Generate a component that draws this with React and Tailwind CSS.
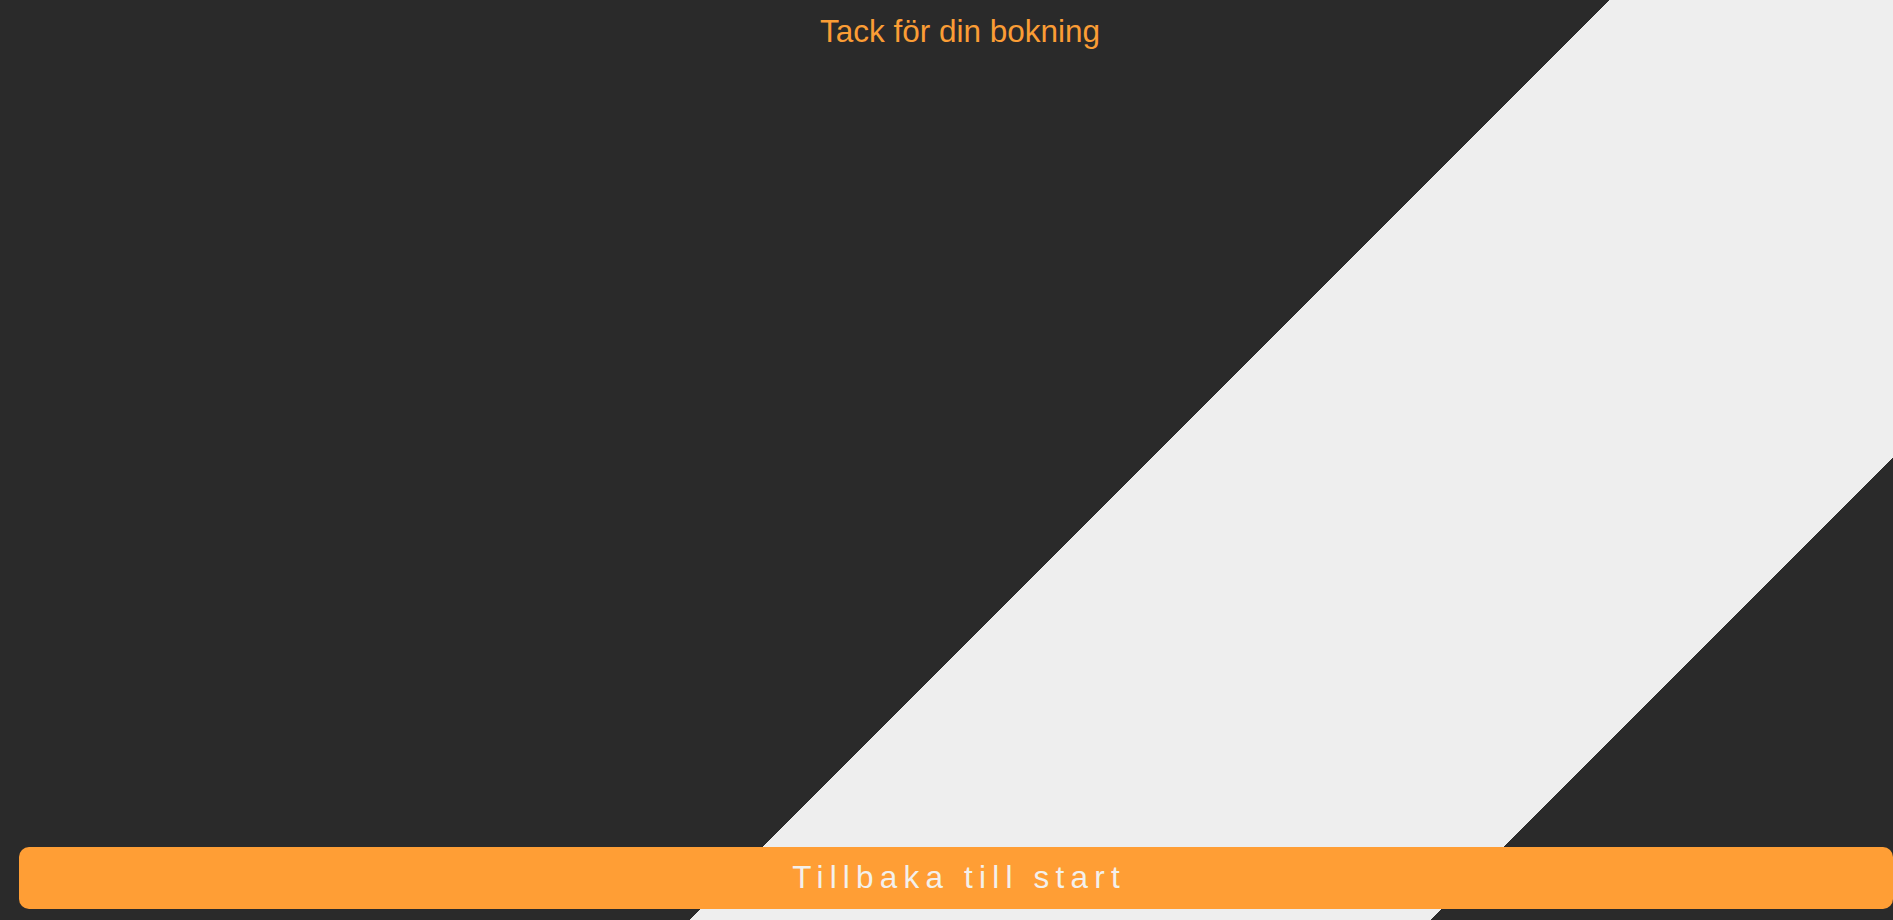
export default function App() {
  return (
    <div
      className="flex h-screen w-full flex-col justify-between overflow-hidden bg-[#2a2a2a] bg-[linear-gradient(135deg,#2a2a2a_0px,#2a2a2a_1138px,#eeeeee_1138px,#eeeeee_1662px,#2a2a2a_1662px)]"
      style={{ fontFamily: '"Liberation Sans", Arial, sans-serif' }}
    >
      <h1 className="pl-[27px] pt-[13px] text-center text-[31.5px] leading-[36px] font-normal text-[#fb9d35]">
        Tack för din bokning
      </h1>
      <div className="mb-[11px] ml-[19px]">
        <button className="flex h-[62px] w-full items-center justify-center rounded-[10px] bg-[#ff9e35] pl-[6px] text-[31.5px] tracking-[6.2px] text-[#f3f0ec]">
          Tillbaka till start
        </button>
      </div>
    </div>
  );
}
